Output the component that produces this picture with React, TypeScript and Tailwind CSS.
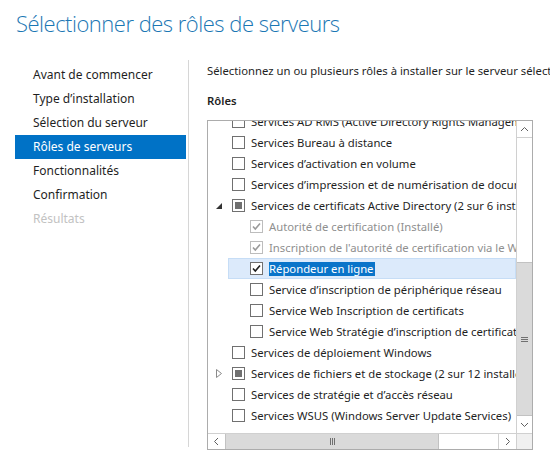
import React from 'react'

type Check = 'none' | 'checked' | 'indet' | 'grey'

interface Role {
  level: number
  expander?: 'open' | 'closed'
  check: Check
  label: string
  muted?: boolean
  selected?: boolean
}

const navItems = [
  { label: 'Avant de commencer' },
  { label: "Type d’installation" },
  { label: 'Sélection du serveur' },
  { label: 'Rôles de serveurs', active: true },
  { label: 'Fonctionnalités' },
  { label: 'Confirmation' },
  { label: 'Résultats', disabled: true },
]

const roles: Role[] = [
  { level: 0, check: 'none', label: 'Services AD RMS (Active Directory Rights Management Services)' },
  { level: 0, check: 'none', label: 'Services Bureau à distance' },
  { level: 0, check: 'none', label: 'Services d’activation en volume' },
  { level: 0, check: 'none', label: 'Services d’impression et de numérisation de document' },
  { level: 0, expander: 'open', check: 'indet', label: 'Services de certificats Active Directory (2 sur 6 installé(s))' },
  { level: 1, check: 'grey', label: 'Autorité de certification (Installé)', muted: true },
  { level: 1, check: 'grey', label: "Inscription de l'autorité de certification via le Web (Installé)", muted: true },
  { level: 1, check: 'checked', label: 'Répondeur en ligne', selected: true },
  { level: 1, check: 'none', label: 'Service d’inscription de périphérique réseau' },
  { level: 1, check: 'none', label: 'Service Web Inscription de certificats' },
  { level: 1, check: 'none', label: 'Service Web Stratégie d’inscription de certificats' },
  { level: 0, check: 'none', label: 'Services de déploiement Windows' },
  { level: 0, expander: 'closed', check: 'indet', label: 'Services de fichiers et de stockage (2 sur 12 installé(s))' },
  { level: 0, check: 'none', label: 'Services de stratégie et d’accès réseau' },
  { level: 0, check: 'none', label: 'Services WSUS (Windows Server Update Services)' },
]

const CheckBox = ({ state }: { state: Check }) => {
  const border = state === 'grey' ? 'border-[#bdbdbd]' : 'border-[#707070]'
  return (
    <span className={`flex h-[13px] w-[13px] shrink-0 items-center justify-center border bg-white ${border}`}>
      {state === 'indet' && <span className="h-[7px] w-[7px] bg-[#707070]" />}
      {(state === 'checked' || state === 'grey') && (
        <svg width="11" height="11" viewBox="0 0 11 11">
          <path
            d="M2 5.5 L4.3 8 L9 2.5"
            fill="none"
            stroke={state === 'grey' ? '#9a9a9a' : '#1f1f1f'}
            strokeWidth="1.6"
          />
        </svg>
      )}
    </span>
  )
}

const Chevron = ({ dir }: { dir: 'up' | 'down' | 'left' | 'right' }) => {
  const pts = {
    up: '1,6 4.5,2.5 8,6',
    down: '1,3 4.5,6.5 8,3',
    left: '6,1 2.5,4.5 6,8',
    right: '3,1 6.5,4.5 3,8',
  }[dir]
  return (
    <svg width="9" height="9" viewBox="0 0 9 9">
      <polyline points={pts} fill="none" stroke="#606060" strokeWidth="1" />
    </svg>
  )
}

const RoleRow = ({ role }: { role: Role }) => (
  <div
    className={`flex h-[21px] items-center whitespace-nowrap ${
      role.selected ? 'ml-[20px] border border-[#c6ddf6] bg-[#dceafb] pl-[21px]' : role.level === 1 ? 'pl-[42px]' : 'pl-[24px]'
    }`}
  >
    {role.level === 0 && (
      <span className="-ml-[20px] mr-[7px] flex w-[13px] shrink-0 justify-center">
        {role.expander === 'open' && (
          <svg width="6" height="6" viewBox="0 0 6 6">
            <polygon points="6,0 6,6 0,6" fill="#333" />
          </svg>
        )}
        {role.expander === 'closed' && (
          <svg width="6" height="9" viewBox="0 0 6 9">
            <polygon points="0.5,0.5 5.5,4.5 0.5,8.5" fill="none" stroke="#8a8a8a" strokeWidth="1" />
          </svg>
        )}
      </span>
    )}
    <CheckBox state={role.check} />
    <span
      className={`ml-[6px] shrink-0 leading-[14px] ${
        role.selected ? 'bg-[#0a74c9] pr-px text-white' : role.muted ? 'text-[#8f8f8f]' : 'text-[#1f1f1f]'
      }`}
    >
      {role.label}
    </span>
  </div>
)

export default function App() {
  return (
    <div
      className="h-[462px] w-[550px] overflow-hidden bg-white text-[12px] text-[#1f1f1f]"
      style={{ fontFamily: '"Segoe UI", "Noto Sans", "Liberation Sans", sans-serif' }}
    >
      <h1
        className="pl-[16px] pt-[8px] text-[22px] font-light leading-[31px] tracking-[-0.5px] text-[#1b77b4]"
        style={{ fontFamily: '"Open Sans", "Noto Sans", sans-serif' }}
      >
        Sélectionner des rôles de serveurs
      </h1>
      <div className="mt-[21px] flex">
        <nav className="h-[387px] w-[189px] shrink-0 border-r border-[#d6d6d6] pl-[15px] pt-[3px]">
          {navItems.map((item) => (
            <div
              key={item.label}
              className={`flex h-[24px] w-[171px] items-center pl-[18px] ${
                item.active ? 'bg-[#0072c6] text-white' : item.disabled ? 'text-[#c2c2c2]' : 'text-[#1f1f1f]'
              }`}
            >
              {item.label}
            </div>
          ))}
        </nav>
        <div className="min-w-0 flex-1 pl-[18px] text-[11.3px]">
          <p className="mt-[3px] whitespace-nowrap leading-[16px]">
            Sélectionnez un ou plusieurs rôles à installer sur le serveur sélectionné.
          </p>
          <p className="mt-[14px] font-semibold leading-[16px]">Rôles</p>
          <div className="mt-[11px] flex h-[330px] w-[326px] flex-col border border-[#acacac]">
            <div className="flex h-[312px]">
              <div className="w-[308px] overflow-hidden">
                <div className="-mt-[10px]">
                  {roles.map((r) => (
                    <RoleRow key={r.label} role={r} />
                  ))}
                </div>
              </div>
              <div className="flex w-[16px] flex-col border-l border-[#d0d0d0]">
                <div className="flex h-[17px] items-center justify-center border-b border-[#d0d0d0]">
                  <Chevron dir="up" />
                </div>
                <div className="h-[124px]" />
                <div className="flex h-[154px] items-center justify-center border-y border-[#c2c2c2] bg-[#dadada]">
                  <div className="flex w-[7px] flex-col gap-[1px]">
                    <span className="h-px bg-[#707070]" />
                    <span className="h-px bg-[#707070]" />
                    <span className="h-px bg-[#707070]" />
                  </div>
                </div>
                <div className="flex flex-1 items-center justify-center">
                  <Chevron dir="down" />
                </div>
              </div>
            </div>
            <div className="flex h-[16px] border-t border-[#d0d0d0]">
              <div className="flex w-[17px] items-center justify-center">
                <Chevron dir="left" />
              </div>
              <div className="flex w-[214px] items-center justify-center border-x border-[#c2c2c2] bg-[#dadada]">
                <div className="flex h-[7px] gap-[1px]">
                  <span className="w-px bg-[#707070]" />
                  <span className="w-px bg-[#707070]" />
                  <span className="w-px bg-[#707070]" />
                </div>
              </div>
              <div className="w-[59px]" />
              <div className="flex w-[18px] items-center justify-center border-l border-[#d0d0d0]">
                <Chevron dir="right" />
              </div>
              <div className="flex-1 border-l border-[#d0d0d0] bg-[#f0f0f0]" />
            </div>
          </div>
        </div>
      </div>
    </div>
  )
}
